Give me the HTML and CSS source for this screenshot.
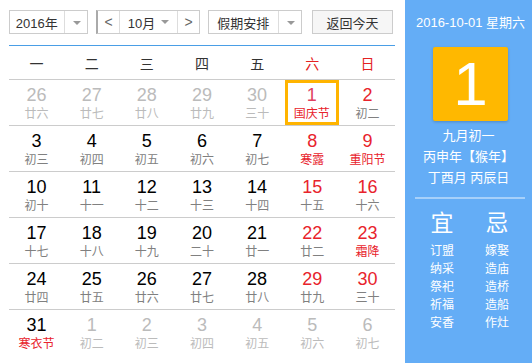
FILE: index.html
```html
<!DOCTYPE html>
<html lang="zh-CN">
<head>
    <meta charset="UTF-8">
    <title>万年历</title>
    <link rel="stylesheet" href="styles.css">
</head>
<body>
    <div class="main">
        <div class="toolbar">
            <div class="select year-select">
                <span class="select-text">2016年</span>
                <span class="select-arrow"></span>
            </div>
            <div class="month-group">
                <span class="month-btn">&lt;</span>
                <span class="month-text">10月 <span class="small-arrow"></span></span>
                <span class="month-btn">&gt;</span>
            </div>
            <div class="select holiday-select">
                <span class="select-text">假期安排</span>
                <span class="select-arrow"></span>
            </div>
            <div class="today-btn">返回今天</div>
        </div>

        <div class="week-head">
            <span>一</span><span>二</span><span>三</span><span>四</span><span>五</span>
            <span class="red">六</span><span class="red">日</span>
        </div>

        <div class="days">
            <div class="row">
                <div class="day other"><b>26</b><i>廿六</i></div>
                <div class="day other"><b>27</b><i>廿七</i></div>
                <div class="day other"><b>28</b><i>廿八</i></div>
                <div class="day other"><b>29</b><i>廿九</i></div>
                <div class="day other"><b>30</b><i>三十</i></div>
                <div class="day weekend today"><b>1</b><i class="fest">国庆节</i></div>
                <div class="day weekend"><b>2</b><i>初二</i></div>
            </div>
            <div class="row">
                <div class="day"><b>3</b><i>初三</i></div>
                <div class="day"><b>4</b><i>初四</i></div>
                <div class="day"><b>5</b><i>初五</i></div>
                <div class="day"><b>6</b><i>初六</i></div>
                <div class="day"><b>7</b><i>初七</i></div>
                <div class="day weekend"><b>8</b><i class="fest">寒露</i></div>
                <div class="day weekend"><b>9</b><i class="fest">重阳节</i></div>
            </div>
            <div class="row">
                <div class="day"><b>10</b><i>初十</i></div>
                <div class="day"><b>11</b><i>十一</i></div>
                <div class="day"><b>12</b><i>十二</i></div>
                <div class="day"><b>13</b><i>十三</i></div>
                <div class="day"><b>14</b><i>十四</i></div>
                <div class="day weekend"><b>15</b><i>十五</i></div>
                <div class="day weekend"><b>16</b><i>十六</i></div>
            </div>
            <div class="row">
                <div class="day"><b>17</b><i>十七</i></div>
                <div class="day"><b>18</b><i>十八</i></div>
                <div class="day"><b>19</b><i>十九</i></div>
                <div class="day"><b>20</b><i>二十</i></div>
                <div class="day"><b>21</b><i>廿一</i></div>
                <div class="day weekend"><b>22</b><i>廿二</i></div>
                <div class="day weekend"><b>23</b><i class="fest">霜降</i></div>
            </div>
            <div class="row">
                <div class="day"><b>24</b><i>廿四</i></div>
                <div class="day"><b>25</b><i>廿五</i></div>
                <div class="day"><b>26</b><i>廿六</i></div>
                <div class="day"><b>27</b><i>廿七</i></div>
                <div class="day"><b>28</b><i>廿八</i></div>
                <div class="day weekend"><b>29</b><i>廿九</i></div>
                <div class="day weekend"><b>30</b><i>三十</i></div>
            </div>
            <div class="row last">
                <div class="day"><b>31</b><i class="fest">寒衣节</i></div>
                <div class="day other"><b>1</b><i>初二</i></div>
                <div class="day other"><b>2</b><i>初三</i></div>
                <div class="day other"><b>3</b><i>初四</i></div>
                <div class="day other"><b>4</b><i>初五</i></div>
                <div class="day other"><b>5</b><i>初六</i></div>
                <div class="day other"><b>6</b><i>初七</i></div>
            </div>
        </div>
    </div>

    <div class="panel">
        <div class="panel-date">2016-10-01 星期六</div>
        <div class="big-day">1</div>
        <div class="lunar">
            <p>九月初一</p>
            <p>丙申年【猴年】</p>
            <p>丁酉月 丙辰日</p>
        </div>
        <div class="divider"></div>
        <div class="yiji">
            <div class="yiji-col">
                <h2>宜</h2>
                <p>订盟</p>
                <p>纳采</p>
                <p>祭祀</p>
                <p>祈福</p>
                <p>安香</p>
            </div>
            <div class="yiji-col">
                <h2>忌</h2>
                <p>嫁娶</p>
                <p>造庙</p>
                <p>造桥</p>
                <p>造船</p>
                <p>作灶</p>
            </div>
        </div>
    </div>
</body>
</html>
```

FILE: styles.css
```css
body {
    margin: 0;
    width: 532px;
    height: 363px;
    display: flex;
    font-family: "Liberation Sans", Arial, "Noto Sans CJK SC", sans-serif;
    background: #fff;
    color: #000;
    overflow: hidden;
}

/* левая часть - календарь */
.main {
    width: 386px;
    padding: 10px 10px 0 9px;
}

.toolbar {
    display: flex;
    height: 24px;
    margin-bottom: 11px;
    font-size: 13px;
    color: #333;
}

.select {
    display: flex;
    border: 1px solid #ccc;
    box-sizing: border-box;
    height: 24px;
    margin-right: 8px;
}

.select-text {
    display: flex;
    align-items: center;
    justify-content: center;
}

.select-arrow {
    width: 23px;
    border-left: 1px solid #ddd;
    position: relative;
}

.select-arrow::after {
    content: "";
    position: absolute;
    left: 8px;
    top: 10px;
    border-left: 4px solid transparent;
    border-right: 4px solid transparent;
    border-top: 4px solid #999;
}

.year-select {
    width: 79px;
}

.year-select .select-text {
    width: 55px;
}

.month-group {
    display: flex;
    width: 104px;
    height: 24px;
    box-sizing: border-box;
    border: 1px solid #ccc;
    border-left: 2px solid #aaa;
    margin-right: 8px;
}

.month-btn {
    width: 21px;
    display: flex;
    align-items: center;
    justify-content: center;
    color: #666;
    font-size: 14px;
}

.month-text {
    flex: 1;
    display: flex;
    align-items: center;
    justify-content: center;
    border-left: 1px solid #ddd;
    border-right: 1px solid #ddd;
}

.small-arrow {
    display: inline-block;
    margin-left: 6px;
    border-left: 4px solid transparent;
    border-right: 4px solid transparent;
    border-top: 4px solid #999;
}

.holiday-select {
    width: 94px;
    margin-right: 10px;
}

.holiday-select .select-text {
    width: 70px;
}

.today-btn {
    width: 81px;
    height: 24px;
    box-sizing: border-box;
    border: 1px solid #ccc;
    background: #f6f6f6;
    display: flex;
    align-items: center;
    justify-content: center;
}

.week-head {
    display: grid;
    grid-template-columns: repeat(7, 1fr);
    border-top: 1px solid #4a9ee6;
    border-bottom: 1px solid #ccc;
    height: 33px;
    align-items: center;
    text-align: center;
    font-size: 14px;
    color: #333;
}

.red {
    color: #e42222;
}

.row {
    display: grid;
    grid-template-columns: repeat(7, 1fr);
    height: 46px;
    box-sizing: border-box;
    border-bottom: 1px solid #ccc;
}

.row.last {
    border-bottom: none;
}

.day {
    display: flex;
    flex-direction: column;
    align-items: center;
    padding-top: 4px;
    box-sizing: border-box;
    height: 45px;
}

.day b {
    font-weight: normal;
    font-size: 18px;
    line-height: 22px;
}

.day i {
    font-style: normal;
    font-size: 12px;
    line-height: 16px;
    color: #808080;
}

.day.weekend b {
    color: #e8232c;
}

.day i.fest {
    color: #e8232c;
}

.day.other b,
.day.other i {
    color: #bbb;
}

.day.today {
    border: 3px solid #ffb400;
    padding-top: 1px;
    margin-right: 1px;
}

.day.today b {
    color: #e04060;
}

/* правая панель */
.panel {
    width: 127px;
    height: 363px;
    background: #64adf6;
    color: #fff;
    text-align: center;
}

.panel-date {
    font-size: 13px;
    margin-top: 15px;
    line-height: 16px;
    padding-left: 4px;
}

.big-day {
    width: 75px;
    height: 74px;
    margin: 16px 0 0 28px;
    background: #ffb800;
    border-radius: 2px;
    box-shadow: 0 1px 3px rgba(0, 0, 0, 0.2);
    font-size: 62px;
    line-height: 74px;
}

.lunar {
    margin-top: 4px;
    font-size: 13px;
}

.lunar p {
    margin: 0;
    line-height: 21px;
}

.divider {
    height: 2px;
    margin: 9px 7px 0 10px;
    background: #a6d0fa;
}

.yiji {
    display: flex;
    justify-content: center;
    gap: 31px;
    margin-top: 9px;
    padding-left: 2px;
}

.yiji-col h2 {
    margin: 0 0 4px;
    font-size: 23px;
    font-weight: normal;
    line-height: 30px;
}

.yiji-col p {
    margin: 0;
    font-size: 12px;
    line-height: 18px;
}
```
